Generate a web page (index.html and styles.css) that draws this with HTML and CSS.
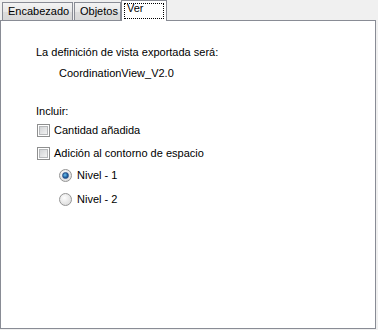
FILE: index.html
```html
<!doctype html>
<html lang="es">
  <head>
    <meta charset="UTF-8" />
    <title>Exportar - Ver</title>
    <link rel="stylesheet" href="styles.css">
  </head>
  <body>
    <div class="tabs">
      <div class="tab">Encabezado</div>
      <div class="tab">Objetos</div>
      <div class="tab active"><span class="focus">Ver</span></div>
    </div>

    <!-- Pagina Ver -->
    <div class="panel">
      <div class="line title">La definición de vista exportada será:</div>
      <div class="line value">CoordinationView_V2.0</div>

      <div class="line include">Incluir:</div>
      <div class="row check-row">
        <span class="check"><span class="check-inner"></span></span>
        <span>Cantidad añadida</span>
      </div>
      <div class="row check-row">
        <span class="check"><span class="check-inner"></span></span>
        <span>Adición al contorno de espacio</span>
      </div>
      <div class="row radio-row first">
        <span class="radio checked"><span class="dot"></span></span>
        <span>Nivel - 1</span>
      </div>
      <div class="row radio-row">
        <span class="radio"><span class="dot"></span></span>
        <span>Nivel - 2</span>
      </div>
    </div>
  </body>
</html>
```

FILE: styles.css
```css
* {
  margin: 0;
  padding: 0;
  box-sizing: border-box;
}
body {
  font-family: "Liberation Sans", Arial, sans-serif;
  font-size: 11px;
  color: #000;
  background: #f0f0f0;
  width: 378px;
  height: 330px;
  overflow: hidden;
}
.tabs {
  display: flex;
  align-items: flex-end;
  height: 20px;
  padding-left: 2px;
  position: relative;
  z-index: 1;
}
.tab {
  height: 18px;
  line-height: 16px;
  padding: 0 5px 0 5px;
  border: 1px solid #898c95;
  border-bottom: none;
  background: linear-gradient(#f3f3f3, #e8e8e8 50%, #dcdcdc 51%, #d8d8d8);
  margin-right: 1px;
}
.tab:first-child {
  width: 71px;
}
.tab:nth-child(2) {
  width: 47px;
}
.tab.active {
  width: 46px;
  height: 21px;
  margin-bottom: -1px;
  margin-left: -1px;
  background: #fff;
  padding: 2px 2px 0 2px;
}
.focus {
  display: block;
  height: 16px;
  line-height: 11px;
  padding-left: 3px;
  outline: 1px dotted #000;
  outline-offset: -1px;
}
.panel {
  width: 376px;
  height: 309px;
  background: #fff;
  border: 1px solid #898c95;
  padding: 0 0 0 35px;
}
.line {
  height: 13px;
  line-height: 13px;
  white-space: nowrap;
}
.title {
  margin-top: 25px;
}
.value {
  margin-top: 8px;
  padding-left: 23px;
}
.include {
  margin-top: 25px;
}
.row {
  display: flex;
  align-items: center;
  height: 13px;
  line-height: 13px;
  white-space: nowrap;
}
.check-row {
  margin-top: 6px;
  gap: 4px;
}
.check-row + .check-row {
  margin-top: 10px;
}
.check-row .check {
  margin-left: 1px;
}
.radio-row {
  margin-top: 11px;
  padding-left: 23px;
  gap: 5px;
}
.radio-row.first {
  margin-top: 9px;
}
.check {
  width: 13px;
  height: 13px;
  border: 1px solid #8e8f8f;
  background: #fff;
  padding: 1px;
  flex-shrink: 0;
}
.check-inner {
  display: block;
  width: 9px;
  height: 9px;
  border: 1px solid #b6b8ba;
  background: linear-gradient(135deg, #d2d4d6, #f2f2f2);
}
.radio {
  width: 13px;
  height: 13px;
  border-radius: 50%;
  border: 1px solid #959595;
  background: radial-gradient(circle at 40% 35%, #fdfdfd, #d4d4d4);
  display: flex;
  align-items: center;
  justify-content: center;
  flex-shrink: 0;
}
.dot {
  width: 7px;
  height: 7px;
  border-radius: 50%;
}
.radio.checked .dot {
  background: radial-gradient(circle at 40% 40%, #6fc2ef, #1b5d9c 60%, #164f86);
  border: 1px solid #29508b;
}
```
